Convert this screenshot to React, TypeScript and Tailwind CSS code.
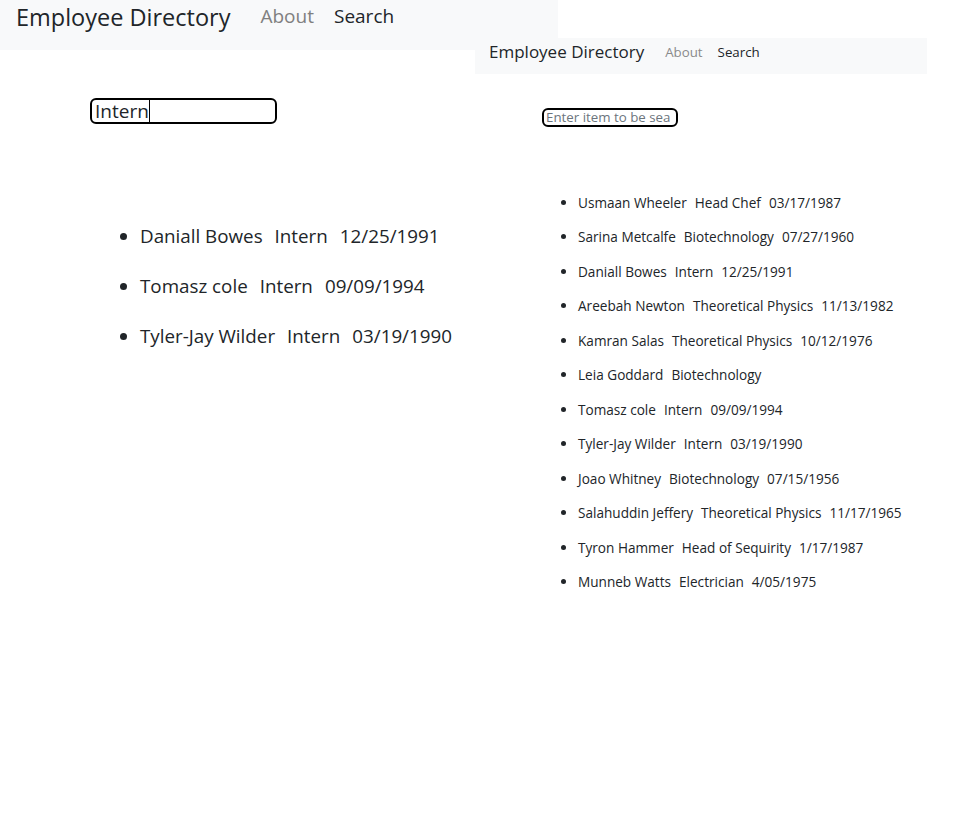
const all: [string, string, string][] = [
  ["Usmaan Wheeler", "Head Chef", "03/17/1987"],
  ["Sarina Metcalfe", "Biotechnology", "07/27/1960"],
  ["Daniall Bowes", "Intern", "12/25/1991"],
  ["Areebah Newton", "Theoretical Physics", "11/13/1982"],
  ["Kamran Salas", "Theoretical Physics", "10/12/1976"],
  ["Leia Goddard", "Biotechnology", ""],
  ["Tomasz cole", "Intern", "09/09/1994"],
  ["Tyler-Jay Wilder", "Intern", "03/19/1990"],
  ["Joao Whitney", "Biotechnology", "07/15/1956"],
  ["Salahuddin Jeffery", "Theoretical Physics", "11/17/1965"],
  ["Tyron Hammer", "Head of Sequirity", "1/17/1987"],
  ["Munneb Watts", "Electrician", "4/05/1975"],
];

const interns = all.filter((e) => e[1] === "Intern");

export default function App() {
  return (
    <div className="relative w-[972px] h-[836px] overflow-hidden bg-white font-['Open_Sans',sans-serif] text-[#212529]">
      {/* Left page */}
      <div className="w-[558px]">
        <nav className="h-[50px] bg-[#f8f9fa] flex items-start pl-[16px]">
          <span className="text-[23.5px] leading-[34px]">Employee Directory</span>
          <span className="ml-[30px] mt-[2px] text-[19px] leading-[28px] text-[#808080]">About</span>
          <span className="ml-[20px] mt-[2px] text-[19px] leading-[28px]">Search</span>
        </nav>
        <div className="pl-[90px] pt-[48px]">
          <div className="w-[187px] h-[26px] border-2 border-black rounded-[6px] flex items-center pl-[3px] text-[19px] leading-none text-[#212529]">
            Intern
            <span className="w-px h-[22px] bg-black" />
          </div>
        </div>
        <ul className="list-disc pl-[140px] mt-[87px] text-[18.8px] leading-[50px]">
          {interns.map((e) => (
            <li key={e[0]}>
              <span className="mr-[12px]">{e[0]}</span>
              <span className="mr-[12px]">{e[1]}</span>
              <span>{e[2]}</span>
            </li>
          ))}
        </ul>
      </div>

      {/* Right page overlay */}
      <div className="absolute left-[475px] top-[38px] w-[452px]">
        <nav className="h-[36px] bg-[#f8f9fa] flex items-start pt-[2px] pl-[14px]">
          <span className="text-[17px] leading-[24px]">Employee Directory</span>
          <span className="ml-[21px] mt-[2px] text-[13.3px] leading-[20px] text-[#8a8a8a]">About</span>
          <span className="ml-[15px] mt-[2px] text-[13.3px] leading-[20px]">Search</span>
        </nav>
        <div className="pl-[67px] pt-[34px]">
          <div className="w-[136px] h-[19px] border-2 border-black rounded-[6px] flex items-center pl-[2px] text-[13.3px] leading-none text-[#6c757d] overflow-hidden whitespace-nowrap">
            Enter item to be sea
          </div>
        </div>
        <ul className="list-disc pl-[103px] mt-[59px] text-[13.6px] leading-[34.45px]">
          {all.map((e) => (
            <li key={e[0]}>
              <span className="mr-[8px]">{e[0]}</span>
              <span className="mr-[8px]">{e[1]}</span>
              <span>{e[2]}</span>
            </li>
          ))}
        </ul>
      </div>
    </div>
  );
}
